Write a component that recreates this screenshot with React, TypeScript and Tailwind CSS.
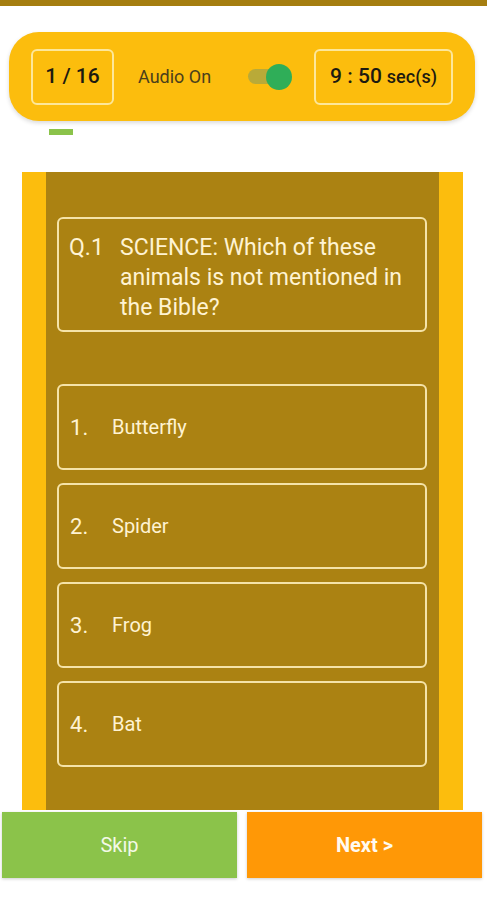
import React from 'react'

const options = ['Butterfly', 'Spider', 'Frog', 'Bat']

export default function App() {
  return (
    <div className="w-[487px] h-[900px] bg-white flex flex-col font-['Roboto',sans-serif] overflow-hidden">
      <div className="h-[6px] bg-[#a57e10]" />

      <div className="mt-[26px] ml-[9px] mr-[12px] h-[89px] rounded-[30px] bg-[#fcbd0d] shadow-[0_2px_4px_rgba(0,0,0,0.15)] flex items-center pl-[22px] pr-[22px]">
        <div className="w-[83px] h-[56px] rounded-[6px] border-2 border-[#fde79a] flex items-center justify-center text-[21px] font-medium text-[#1d1a10]">
          1 / 16
        </div>
        <span className="ml-[24px] text-[18px] text-[#4a3f1c]">Audio On</span>
        <div className="ml-[37px] relative w-[44px] h-[26px] flex items-center">
          <div className="w-[36px] h-[15px] rounded-full bg-[#b9aa38]" />
          <div className="absolute right-0 top-0 w-[26px] h-[26px] rounded-full bg-[#2fae58]" />
        </div>
        <div className="ml-auto w-[139px] h-[56px] rounded-[6px] border-2 border-[#fde79a] flex items-center justify-center text-[#1d1a10] font-medium">
          <span className="text-[21px]">9 : 50</span>
          <span className="text-[18px] ml-[5px]">sec(s)</span>
        </div>
      </div>

      <div className="ml-[49px] mt-[8px] w-[24px] h-[6px] bg-[#8bc34a]" />

      <div className="mt-[37px] ml-[22px] mr-[24px] h-[638px] bg-[#fcbd0d] px-[24px] flex">
        <div className="flex-1 bg-[#ab8212] pl-[11px] pr-[12px] pt-[45px] flex flex-col">
          <div className="h-[115px] rounded-[6px] border-2 border-[#f5e3a8] flex pl-[10px] pr-[8px] pt-[14px] text-[23px] leading-[30px] text-[#fff3d2]">
            <span className="w-[51px] shrink-0">Q.1</span>
            <span>SCIENCE: Which of these animals is not mentioned in the Bible?</span>
          </div>
          <div className="mt-[52px] flex flex-col gap-[13px]">
            {options.map((o, i) => (
              <div
                key={o}
                className="h-[86px] rounded-[6px] border-2 border-[#f5e3a8] flex items-center pl-[11px] text-[#fff3d2]"
              >
                <span className="w-[42px] text-[22px]">{i + 1}.</span>
                <span className="text-[20px]">{o}</span>
              </div>
            ))}
          </div>
        </div>
      </div>

      <div className="mt-[2px] flex gap-[10px] pl-[2px] pr-[5px] h-[66px]">
        <button className="flex-1 bg-[#8bc34a] text-[#f3f9e6] text-[20px] shadow-[0_1px_3px_rgba(0,0,0,0.2)]">Skip</button>
        <button className="flex-1 bg-[#ff9806] text-[#fffaf0] text-[20px] font-bold shadow-[0_1px_3px_rgba(0,0,0,0.2)]">Next &gt;</button>
      </div>
    </div>
  )
}
